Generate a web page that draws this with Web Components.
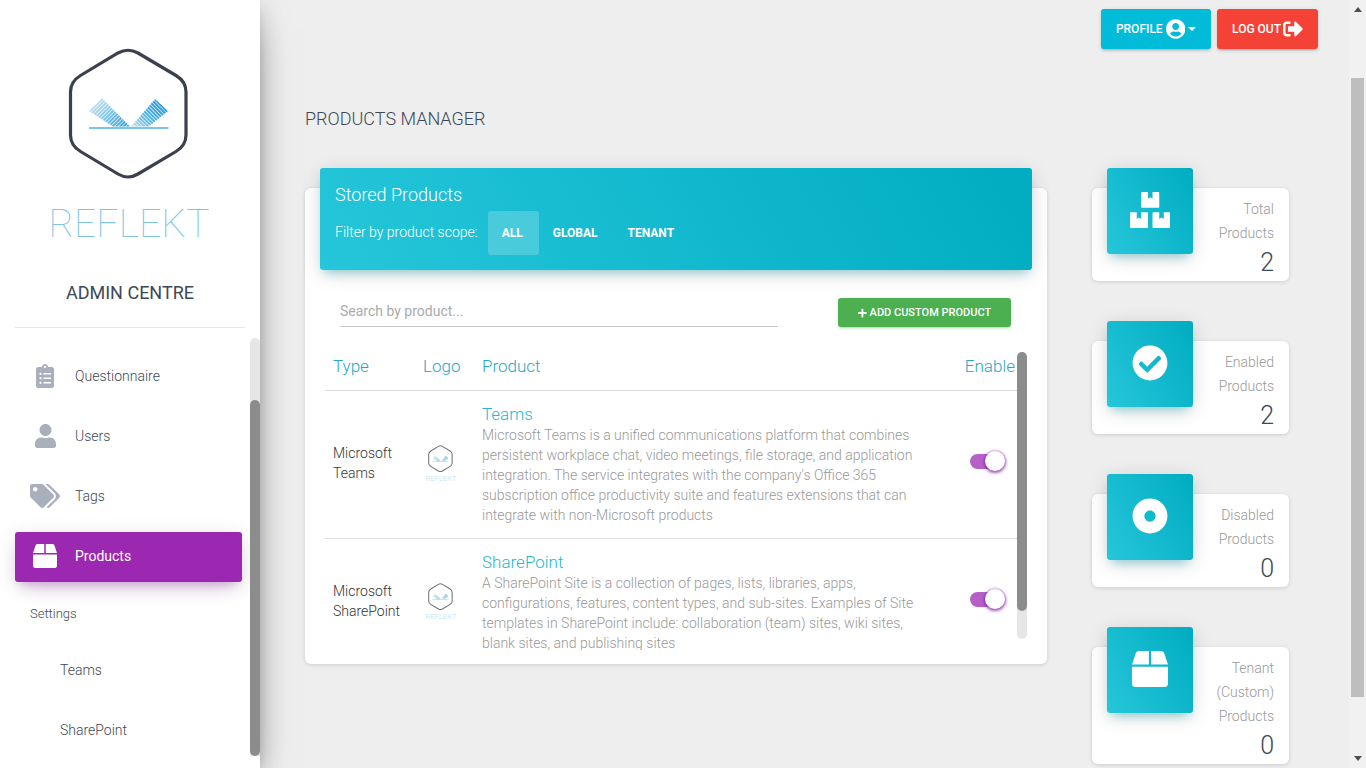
<!DOCTYPE html>
<html lang="en">
<head>
<meta charset="utf-8">
<title>Products Manager</title>
<style>
html,body{margin:0;height:768px;overflow:hidden;background:#eee;font-family:Roboto,"Liberation Sans",sans-serif;color:#3c4858}
</style>
</head>
<body>
<admin-app>
  <side-bar slot="side">
    <nav-item icon="clipboard">Questionnaire</nav-item>
    <nav-item icon="user">Users</nav-item>
    <nav-item icon="tags">Tags</nav-item>
    <nav-item icon="box" active>Products</nav-item>
    <nav-head>Settings</nav-head>
    <nav-sub>Teams</nav-sub>
    <nav-sub>SharePoint</nav-sub>
  </side-bar>
  <top-bar slot="top">
    <action-btn color="#00bcd8" icon="usercircle" icon-size="20" gap="3" caret>Profile</action-btn>
    <action-btn color="#f44336" icon="signout" icon-size="20" gap="2">Log out</action-btn>
  </top-bar>
  <page-title slot="top">PRODUCTS MANAGER</page-title>
  <product-card slot="left">
    <product-row type="Microsoft Teams" name="Teams">Microsoft Teams is a unified communications platform that combines persistent workplace chat, video meetings, file storage, and application integration. The service integrates with the company's Office 365 subscription office productivity suite and features extensions that can integrate with non-Microsoft products</product-row>
    <product-row type="Microsoft SharePoint" name="SharePoint">A SharePoint Site is a collection of pages, lists, libraries, apps, configurations, features, content types, and sub-sites. Examples of Site templates in SharePoint include: collaboration (team) sites, wiki sites, blank sites, and publishing sites</product-row>
  </product-card>
  <stat-card slot="right" icon="boxes" size="36" value="2">Total<br>Products</stat-card>
  <stat-card slot="right" icon="check" size="36" value="2">Enabled<br>Products</stat-card>
  <stat-card slot="right" icon="dot" size="36" value="0">Disabled<br>Products</stat-card>
  <stat-card slot="right" icon="box" size="36" value="0">Tenant<br>(Custom)<br>Products</stat-card>
</admin-app>

<script>
const ICONS={
clipboard:[384,512,"M336 64h-80c0-35.3-28.7-64-64-64s-64 28.7-64 64H48C21.5 64 0 85.5 0 112v352c0 26.5 21.5 48 48 48h288c26.5 0 48-21.5 48-48V112c0-26.5-21.5-48-48-48zM96 424c-13.3 0-24-10.7-24-24s10.7-24 24-24 24 10.7 24 24-10.7 24-24 24zm0-96c-13.3 0-24-10.7-24-24s10.7-24 24-24 24 10.7 24 24-10.7 24-24 24zm0-96c-13.3 0-24-10.7-24-24s10.7-24 24-24 24 10.7 24 24-10.7 24-24 24zm96-192c13.3 0 24 10.7 24 24s-10.7 24-24 24-24-10.7-24-24 10.7-24 24-24zm128 368c0 4.4-3.6 8-8 8H168c-4.4 0-8-3.6-8-8v-16c0-4.4 3.6-8 8-8h144c4.4 0 8 3.6 8 8v16zm0-96c0 4.4-3.6 8-8 8H168c-4.4 0-8-3.6-8-8v-16c0-4.4 3.6-8 8-8h144c4.4 0 8 3.6 8 8v16zm0-96c0 4.4-3.6 8-8 8H168c-4.4 0-8-3.6-8-8v-16c0-4.4 3.6-8 8-8h144c4.4 0 8 3.6 8 8v16z"],
user:[448,512,"M224 256c70.7 0 128-57.3 128-128S294.7 0 224 0 96 57.3 96 128s57.3 128 128 128zm89.6 32h-16.7c-22.2 10.2-46.9 16-72.9 16s-50.6-5.8-72.9-16h-16.7C60.2 288 0 348.2 0 422.4V464c0 26.5 21.5 48 48 48h352c26.5 0 48-21.5 48-48v-41.6c0-74.2-60.2-134.4-134.4-134.4z"],
tags:[640,512,"M497.941 225.941L286.059 14.059A48 48 0 0 0 252.118 0H48C21.49 0 0 21.49 0 48v204.118a48 48 0 0 0 14.059 33.941l211.882 211.882c18.744 18.745 49.136 18.746 67.882 0l204.118-204.118c18.745-18.745 18.745-49.137 0-67.882zM112 160c-26.51 0-48-21.49-48-48s21.49-48 48-48 48 21.49 48 48-21.49 48-48 48zm513.941 133.823L421.823 497.941c-18.745 18.745-49.137 18.745-67.882 0l-.36-.36L527.64 323.522c16.999-16.999 26.36-39.6 26.36-63.64s-9.362-46.641-26.36-63.64L331.397 0h48.721a48 48 0 0 1 33.941 14.059l211.882 211.882c18.745 18.745 18.745 49.137 0 67.882z"],
box:[512,512,"M509.5 184.6L458.9 32.8C452.4 13.2 434.1 0 413.4 0H272v192h238.7c-.4-2.5-.4-5-1.2-7.4zM240 0H98.6c-20.7 0-39 13.2-45.5 32.8L2.5 184.6c-.8 2.4-.8 4.9-1.2 7.4H240V0zM0 224v240c0 26.5 21.5 48 48 48h416c26.5 0 48-21.5 48-48V224H0z"],
boxes:[576,512,"M560 288h-80v96l-32-21.3-32 21.3v-96h-80c-8.8 0-16 7.2-16 16v192c0 8.8 7.2 16 16 16h224c8.8 0 16-7.2 16-16V304c0-8.8-7.2-16-16-16zm-384-64h224c8.8 0 16-7.2 16-16V16c0-8.8-7.2-16-16-16h-80v96l-32-21.3L256 96V0h-80c-8.8 0-16 7.2-16 16v192c0 8.8 7.2 16 16 16zm64 64h-80v96l-32-21.3L96 384v-96H16c-8.8 0-16 7.2-16 16v192c0 8.8 7.2 16 16 16h224c8.8 0 16-7.2 16-16V304c0-8.8-7.2-16-16-16z"],
check:[512,512,"M504 256c0 136.967-111.033 248-248 248S8 392.967 8 256 119.033 8 256 8s248 111.033 248 248zM227.314 387.314l184-184c6.248-6.248 6.248-16.379 0-22.627l-22.627-22.627c-6.248-6.249-16.379-6.249-22.628 0L216 308.118l-70.059-70.059c-6.248-6.248-16.379-6.248-22.628 0l-22.627 22.627c-6.248 6.248-6.248 16.379 0 22.627l104 104c6.249 6.249 16.379 6.249 22.628.001z"],
dot:[512,512,"M256 8C119.033 8 8 119.033 8 256s111.033 248 248 248 248-111.033 248-248S392.967 8 256 8zm80 248c0 44.112-35.888 80-80 80s-80-35.888-80-80 35.888-80 80-80 80 35.888 80 80z"],
usercircle:[496,512,"M248 8C111 8 0 119 0 256s111 248 248 248 248-111 248-248S385 8 248 8zm0 96c48.6 0 88 39.4 88 88s-39.4 88-88 88-88-39.4-88-88 39.4-88 88-88zm0 344c-58.7 0-111.3-26.6-146.5-68.2 18.8-35.4 55.6-59.8 98.5-59.8 2.4 0 4.8.4 7.1 1.1 13 4.2 26.6 6.9 40.9 6.9 14.3 0 28-2.7 40.9-6.9 2.3-.7 4.7-1.1 7.1-1.1 42.9 0 79.7 24.4 98.5 59.8C359.3 421.4 306.7 448 248 448z"],
signout:[512,512,"M497 273L329 441c-15 15-41 4.5-41-17v-96H152c-13.3 0-24-10.7-24-24v-96c0-13.3 10.7-24 24-24h136V88c0-21.4 25.9-32 41-17l168 168c9.3 9.4 9.3 24.6 0 34zM192 436v-40c0-6.6-5.4-12-12-12H96c-17.7 0-32-14.3-32-32V160c0-17.7 14.3-32 32-32h84c6.6 0 12-5.4 12-12V76c0-6.6-5.4-12-12-12H96c-53 0-96 43-96 96v192c0 53 43 96 96 96h84c6.6 0 12-5.4 12-12z"],
plus:[448,512,"M416 208H272V64c0-17.67-14.33-32-32-32h-32c-17.67 0-32 14.33-32 32v144H32c-17.67 0-32 14.33-32 32v32c0 17.67 14.33 32 32 32h144v144c0 17.67 14.33 32 32 32h32c17.67 0 32-14.33 32-32V304h144c17.67 0 32-14.33 32-32v-32c0-17.67-14.33-32-32-32z"]
};
function base(tag,css,html,init){
  customElements.define(tag,class extends HTMLElement{
    constructor(){super();this.attachShadow({mode:"open"});}
    connectedCallback(){
      if(this._done)return;this._done=true;
      const h=typeof html==="function"?html(this):html;
      this.shadowRoot.innerHTML="<style>"+css+"</style>"+h;
      if(init)init(this);
    }
  });
}
function svgIcon(name,size){
  const i=ICONS[name];
  return `<svg width="${size*i[0]/i[1]}" height="${size}" viewBox="0 0 ${i[0]} ${i[1]}" fill="currentColor" style="display:block"><path d="${i[2]}"/></svg>`;
}
function markSvg(uid,strokeCol,strokeW){
  let left="",right="";
  const n=17;
  for(let k=0;k<n;k++){
    const t=k/(n-1);
    const cx=92+t*30, cy=102+t*30;
    left+=`<line x1="${cx-10}" y1="${cy+10}" x2="${cx+12}" y2="${cy-12}" opacity="${(.25+.75*t).toFixed(2)}"/>`;
    const dx=165-t*30, dy=102+t*30;
    right+=`<line x1="${dx-12}" y1="${dy-12}" x2="${dx+10}" y2="${dy+10}" opacity="${(1-.75*Math.pow(t,2)).toFixed(2)}"/>`;
  }
  return `<svg viewBox="67 46 126 135" style="display:block;width:100%;height:100%">
  <defs>
   <clipPath id="${uid}l"><polygon points="89,111 102,98 130,126.5 113,126.5"/></clipPath>
   <clipPath id="${uid}r"><polygon points="131,126.5 155,99 168,111 149,126.5"/></clipPath>
  </defs>
  <path d="M118 53 Q128 47.5 138 53 L176 75.5 Q186 81.5 186 92 L186 135 Q186 145.5 176 151.5 L138 174 Q128 180 118 174 L80.5 151.5 Q70.5 145.5 70.5 135 L70.5 92 Q70.5 81.5 80.5 75.5 Z" fill="none" stroke="${strokeCol}" stroke-width="${strokeW}"/>
  <g clip-path="url(#${uid}l)" stroke="#2f9fdc" stroke-width="2">${left}</g>
  <g clip-path="url(#${uid}r)" stroke="#2f9fdc" stroke-width="2">${right}</g>
  <rect x="89" y="127" width="79.5" height="2" fill="#7cc3e8"/>
  </svg>`;
}
let markN=0;

base("fa-icon",":host{display:inline-flex;align-items:center;justify-content:center;line-height:0}",
  el=>svgIcon(el.getAttribute("name"),+el.getAttribute("size")));

base("logo-mark",`:host{display:flex;flex-direction:column;align-items:center}
  .m{width:var(--w);height:var(--h)}
  .t{color:var(--tc,#7fc4e8);font-weight:var(--fw,100);font-family:Roboto,"Liberation Sans",sans-serif;font-size:var(--fs);line-height:var(--lh);letter-spacing:var(--ls);margin-top:var(--mt);margin-left:var(--ml,0);white-space:nowrap}`,
  el=>`<div class="m">${markSvg("lg"+(++markN),el.getAttribute("stroke")||"#3b3f4e",el.getAttribute("sw")||"3.2")}</div><div class="t">REFLEKT</div>`);

base("nav-item",`:host{display:flex;align-items:center;height:50px;box-sizing:border-box;padding:0 0 2px 15px;margin:0 18px 10px 15px;border-radius:3px;font-size:14px;font-weight:300;color:#3c4858}
  :host([active]){background:#9c27b0;color:#fff;font-weight:400;box-shadow:0 12px 20px -10px rgba(156,39,176,.28),0 4px 20px 0 rgba(0,0,0,.12),0 7px 8px -5px rgba(156,39,176,.2)}
  .i{width:30px;margin-right:15px;display:flex;justify-content:center;color:#a9afbb}
  :host([active]) .i{color:#fff}`,
  el=>`<div class="i"><fa-icon name="${el.getAttribute("icon")}" size="24"></fa-icon></div><slot></slot>`);

base("nav-head",`:host{display:flex;align-items:center;height:53px;box-sizing:border-box;padding:0 0 11px 30px;font-size:13px;font-weight:300;color:#3c4858}`,"<slot></slot>");
base("nav-sub",`:host{display:flex;align-items:center;height:50px;margin-bottom:10px;padding-left:60px;font-size:14px;font-weight:300;color:#3c4858}`,"<slot></slot>");

base("side-bar",`:host{display:block;position:relative;width:260px;height:768px;background:#fff;flex:none;z-index:3;box-shadow:0 16px 38px -12px rgba(0,0,0,.56),0 4px 25px 0 rgba(0,0,0,.12),0 8px 10px -5px rgba(0,0,0,.2);overflow:hidden}
  .brand{display:flex;flex-direction:column;align-items:center;padding-top:46px}
  logo-mark{--w:126px;--h:135px;--fs:39px;--lh:46px;--ls:.1px;--mt:20px;--ml:-2px}
  .admin{font-size:18px;font-weight:400;line-height:24px;margin-top:34px;color:#3c4858}
  hr{border:0;height:1px;background:#e6e6e6;margin:22px 15px 24px}
  .track{position:absolute;left:250px;top:338px;width:10px;height:418px;background:#e6e6e6;border-radius:5px 5px 0 0}
  .thumb{position:absolute;left:250px;top:400px;width:10px;height:356px;background:#8c8c8c;border-radius:5px}`,
  `<div class="brand"><logo-mark></logo-mark><div class="admin">ADMIN CENTRE</div></div><hr><slot></slot><div class="track"></div><div class="thumb"></div>`);

base("action-btn",`:host{display:flex;align-items:center;height:40px;padding:0 15px;border-radius:3px;color:#fff;font-size:12px;font-weight:500;text-transform:uppercase;box-shadow:0 2px 2px 0 rgba(0,0,0,.1),0 3px 1px -2px rgba(0,0,0,.08),0 1px 5px 0 rgba(0,0,0,.1)}
  .c{width:0;height:0;border:4.5px solid transparent;border-top-color:#fff;border-bottom:0;margin-left:3px}`,
  el=>`<style>:host{background:${el.getAttribute("color")}} fa-icon{margin-left:${el.getAttribute("gap")}px}</style><slot></slot><fa-icon name="${el.getAttribute("icon")}" size="${el.getAttribute("icon-size")}"></fa-icon>${el.hasAttribute("caret")?'<span class="c"></span>':''}`);

base("top-bar",`:host{display:flex;justify-content:flex-end;gap:6px;padding:9px 31px 0 0}`,"<slot></slot>");
base("page-title",`:host{display:block;margin:59px 0 0 45px;font-size:18px;font-weight:300;line-height:22px;color:#3c4858}`,"<slot></slot>");

base("scope-tab",`:host{display:flex;align-items:center;height:44px;box-sizing:border-box;padding:0 16px 1px 14px;border-radius:3px;color:#fff;font-size:12px;font-weight:700;text-transform:uppercase}
  :host([active]){background:rgba(255,255,255,.2)}`,"<slot></slot>");

base("toggle-switch",`:host{display:block;position:relative;width:36px;height:22px}
  .t{position:absolute;left:0;top:4px;width:30px;height:15px;border-radius:8px;background:#b75fc9}
  .k{position:absolute;left:15px;top:1px;width:20px;height:20px;border-radius:50%;background:#fff;box-sizing:border-box;box-shadow:0 1px 3px 1px rgba(123,31,162,.75)}`,
  `<div class="t"></div><div class="k"></div>`);

base("product-row",`:host{display:grid;grid-template-columns:90px 59px 445px 1fr;border-bottom:1px solid #ddd}
  :host(:last-child){border-bottom:0}
  .type{padding-left:8px;padding-right:10px;align-self:center;margin-top:-4px;font-size:14px;font-weight:300;line-height:20px;color:#333}
  .logo{padding-left:8px;align-self:center}
  logo-mark{width:36px;--w:25.6px;--h:27.4px;--fs:7.6px;--lh:10px;--ls:0;--mt:2px;--fw:300;--tc:#c3e2f2}
  .p{padding:12px 0 13px 8px}
  .n{font-size:17px;font-weight:300;line-height:22px;color:#26b7cf}
  .d{font-size:14px;font-weight:300;line-height:20px;color:#999}
  .e{align-self:center;justify-self:start;margin-left:51px;margin-top:-8px}`,
  el=>`<div class="type">${el.getAttribute("type").replace(" ","<br>")}</div>
  <div class="logo"><logo-mark stroke="#6d7078" sw="5"></logo-mark></div>
  <div class="p"><div class="n">${el.getAttribute("name")}</div><div class="d"><slot></slot></div></div>
  <div class="e"><toggle-switch></toggle-switch></div>`);

base("product-card",`:host{display:flow-root;width:742px;height:476px;box-sizing:border-box;background:#fff;border-radius:6px;box-shadow:0 1px 4px 0 rgba(0,0,0,.14);padding:0 20px}
  .head{margin:-20px -5px 0;height:102px;box-sizing:border-box;padding:14px 15px 0;border-radius:3px;color:#fff;background:linear-gradient(60deg,#26c6da,#00acc1);box-shadow:0 4px 20px 0 rgba(0,0,0,.14),0 7px 10px -5px rgba(0,172,193,.4)}
  .h1{font-size:18px;font-weight:300;line-height:26px}
  .filter{display:flex;align-items:center;margin-top:3px;font-size:14px;font-weight:300}
  .filter>span{margin:-2px 10px 0 0}
  .tools{display:flex;align-items:stretch;justify-content:space-between;margin:28px 16px 0 15px;height:29px}
  .search{width:438px;border-bottom:1px solid #c8c8c8;font-size:14px;color:#aaa;line-height:26px}
  .add{display:flex;align-items:center;justify-content:center;gap:3px;width:173px;background:#4caf50;color:#fff;border-radius:3px;font-size:11px;font-weight:500;text-transform:uppercase;box-shadow:0 2px 2px 0 rgba(76,175,80,.14),0 3px 1px -2px rgba(76,175,80,.2),0 1px 5px 0 rgba(76,175,80,.12)}
  .wrap{position:relative;height:298px;margin-top:25px;overflow:hidden}
  .rows{width:692px}
  .th{display:grid;grid-template-columns:90px 59px 1fr auto;height:39px;box-sizing:border-box;border-bottom:1px solid #ddd;font-size:17px;font-weight:300;line-height:28px;color:#26a8c4}
  .th div:first-child{padding-left:8px}.th .r{padding-right:2px}.th div:nth-child(2){padding-left:8px}.th div:nth-child(3){padding-left:8px}
  .tr{position:absolute;left:692px;top:0;width:10px;height:287px;border-radius:5px;background:#e6e6e6}
  .tm{position:absolute;left:692px;top:0;width:10px;height:259px;border-radius:5px;background:#8c8c8c}`,
  `<div class="head"><div class="h1">Stored Products</div>
    <div class="filter"><span>Filter by product scope:</span><scope-tab active>All</scope-tab><scope-tab>Global</scope-tab><scope-tab>Tenant</scope-tab></div></div>
   <div class="tools"><div class="search">Search by product...</div><div class="add"><fa-icon name="plus" size="10"></fa-icon>Add custom product</div></div>
   <div class="wrap"><div class="rows"><div class="th"><div>Type</div><div>Logo</div><div>Product</div><div class="r">Enable</div></div><slot></slot></div><div class="tr"></div><div class="tm"></div></div>`);

base("stat-card",`:host{display:flex;width:197px;box-sizing:border-box;background:#fff;border-radius:6px;box-shadow:0 1px 4px 0 rgba(0,0,0,.14);margin-bottom:60px;padding-right:15px}
  .ic{flex:none;width:86px;height:86px;box-sizing:border-box;padding-bottom:2px;margin:-20px 0 0 15px;border-radius:3px;display:flex;align-items:center;justify-content:center;color:#fff;background:linear-gradient(60deg,#26c6da,#00acc1);box-shadow:0 4px 20px 0 rgba(0,0,0,.14),0 7px 10px -5px rgba(0,172,193,.4)}
  .tx{flex:1;text-align:right;padding-top:9px}
  .l{font-size:14px;font-weight:300;line-height:24px;color:#999}
  .v{font-size:25px;font-weight:300;line-height:36px;color:#3c4858}`,
  el=>`<div class="ic"><fa-icon name="${el.getAttribute("icon")}" size="${el.getAttribute("size")}"></fa-icon></div><div class="tx"><div class="l"><slot></slot></div><div class="v">${el.getAttribute("value")}</div></div>`);

base("page-scroll",`:host{display:flex;flex-direction:column;align-items:center;flex:none;width:17px;height:768px;background:#f1f1f1}
  .u,.d{width:0;height:0;border:4px solid transparent}
  .u{border-bottom:5px solid #505050;border-top:0;margin-top:7px}
  .t{width:13px;height:619px;background:#bebebe;margin-top:66px}
  .d{border-top:5px solid #505050;border-bottom:0;margin-top:59px}`,
  `<div class="u"></div><div class="t"></div><div class="d"></div>`);

base("admin-app",`:host{display:flex;width:1366px;height:768px;overflow:hidden}
  .main{flex:1;min-width:0}
  .cols{display:flex;margin:58px 0 0 45px}
  .left{width:742px;flex:none;display:flow-root}
  .right{margin-left:45px;width:197px;flex:none}`,
  `<slot name="side"></slot><div class="main"><slot name="top"></slot><div class="cols"><div class="left"><slot name="left"></slot></div><div class="right"><slot name="right"></slot></div></div></div><page-scroll></page-scroll>`);
</script>
</body>
</html>
